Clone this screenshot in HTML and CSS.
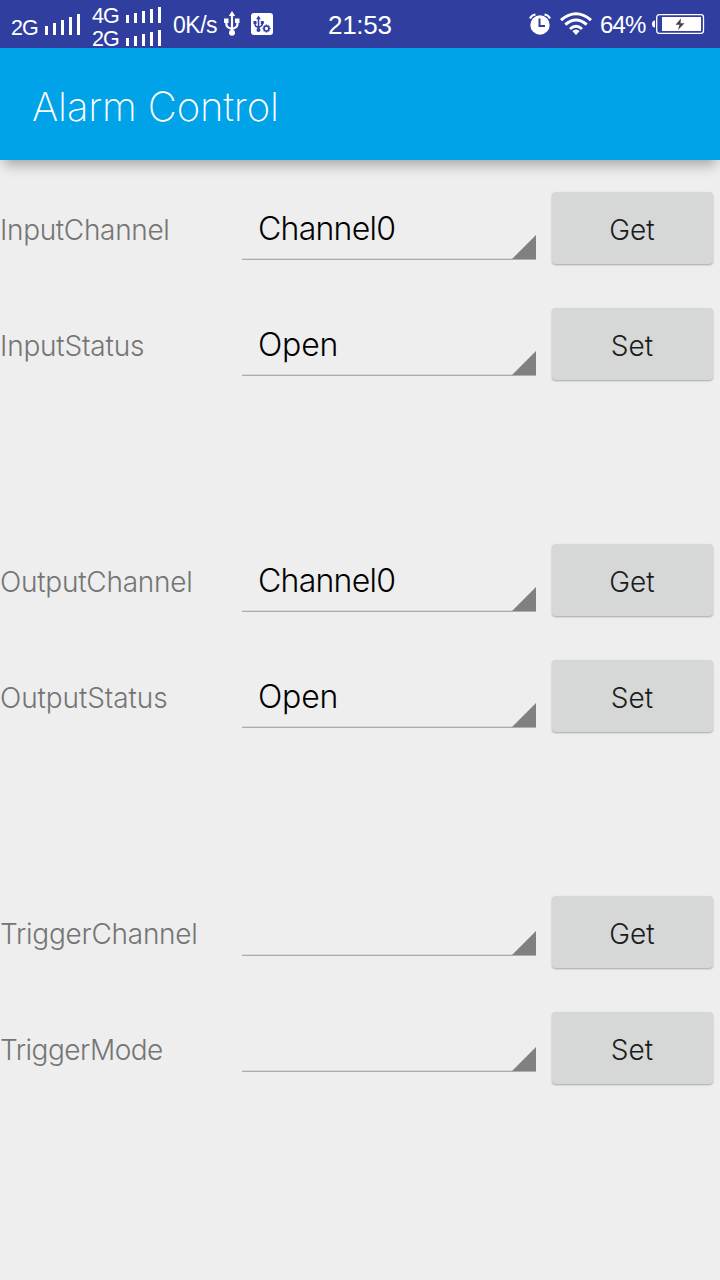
FILE: index.html
```
<!DOCTYPE html>
<html lang="en">
<head>
<meta charset="utf-8">
<title>Alarm Control</title>
<link rel="stylesheet" href="styles.css">
</head>
<body>
<header class="status">
  <div class="sim sim-main">
    <span class="net">2G</span>
    <svg class="bars-lg" width="35" height="21" viewBox="0 0 35 21"><path d="M0 12h3v9H0zM8 9h3v12H8zM16 6h3v15h-3zM24 3h3v18h-3zM32 0h3v21h-3z"/></svg>
  </div>
  <div class="sim-stack">
    <div class="sim"><span class="net">4G</span><svg width="35" height="16" viewBox="0 0 35 16"><path d="M0 8h3v8H0zM8 6h3v10H8zM16 4h3v12h-3zM24 2h3v14h-3zM32 0h3v16h-3z"/></svg></div>
    <div class="sim"><span class="net">2G</span><svg width="35" height="16" viewBox="0 0 35 16"><path d="M0 8h3v8H0zM8 6h3v10H8zM16 4h3v12h-3zM24 2h3v14h-3zM32 0h3v16h-3z"/></svg></div>
  </div>
  <span class="speed">0K/s</span>
  <svg class="usb" width="16" height="26" viewBox="0 0 16 26"><path d="M8 0l3.200 5H4.800zM0 7.500h4.500v4.500H0zM11 7.500h4.500v4.500H11z"/><circle cx="8" cy="21.700" r="3"/><path class="line" d="M8 4v18M2.400 11v2.500q0 3 5.600 4.500M13.400 11v2.500q0 3-5.400 4.500"/></svg>
  <svg class="debug" width="22" height="22" viewBox="0 0 22 22"><rect width="22" height="22" rx="3"/><g class="ink"><path d="M7.500 2.500l2.300 3.700H5.200zM2.500 8h3v3h-3zM9.800 8h3v3h-3z"/><circle cx="7.500" cy="17" r="2"/><path class="thin" d="M7.500 5v12M4 10v1.500q0 2 3.500 3M11.300 10v1q0 2-3.800 3.500"/><path class="thin" d="M15.500 11.500v8M11.500 15.500h8M12.700 12.700l5.600 5.600M18.300 12.700l-5.600 5.600"/></g><circle class="hub" cx="15.500" cy="15.500" r="2.400"/></svg>
  <span class="clock">21:53</span>
  <svg class="alarm" width="22" height="22" viewBox="0 0 22 22"><circle cx="11" cy="12" r="9.700"/><path class="line tips" d="M1 5.500Q2.500 2 6.500 1.500M21 5.500Q19.500 2 15.500 1.500"/><path class="hands" d="M10.500 5.500v7.500H16"/></svg>
  <svg class="wifi" width="32" height="24" viewBox="0 0 32 24"><path class="line arc" d="M1 8.200Q16-4.600 31 8.200M5.300 12.700Q16 3.400 26.700 12.700M10 17Q16 11.500 22 17"/><path d="M12.300 19q3.700-3 7.400 0L16 23z"/></svg>
  <span class="percent">64%</span>
  <svg class="battery" width="53" height="20" viewBox="0 0 53 20"><path d="M3 6.500v7Q0 13.500 0 10t3-3.500z"/><rect class="shell" x="4.700" y=".7" width="46.800" height="18.600" rx="2.500"/><rect x="10" y="3" width="39" height="14"/><path class="bolt" d="M29 4.500l-5.500 6.200h4L26 16l6.500-6.700h-4z"/></svg>
</header>
<div class="appbar"><h1 class="title">Alarm Control</h1></div>
<main class="content">
  <section class="group">
    <div class="row"><span class="label input-channel">InputChannel</span><div class="spinner"><span class="value v-channel">Channel0</span></div><button class="btn">Get</button></div>
    <div class="row"><span class="label input-status">InputStatus</span><div class="spinner"><span class="value v-open">Open</span></div><button class="btn">Set</button></div>
  </section>
  <section class="group">
    <div class="row"><span class="label output-channel">OutputChannel</span><div class="spinner"><span class="value v-channel">Channel0</span></div><button class="btn">Get</button></div>
    <div class="row"><span class="label output-status">OutputStatus</span><div class="spinner"><span class="value v-open">Open</span></div><button class="btn">Set</button></div>
  </section>
  <section class="group">
    <div class="row"><span class="label trigger-channel">TriggerChannel</span><div class="spinner empty"></div><button class="btn">Get</button></div>
    <div class="row"><span class="label trigger-mode">TriggerMode</span><div class="spinner empty"></div><button class="btn">Set</button></div>
  </section>
</main>
</body>
</html>
```
FILE: styles.css
```
* { box-sizing: border-box; }
body {
  margin: 0;
  width: 720px;
  height: 1280px;
  overflow: hidden;
  background: #eeeeee;
  font-family: Inter, "Liberation Sans", sans-serif;
  font-weight: 300;
}
.status {
  display: flex;
  align-items: flex-start;
  height: 48px;
  background: #303f9f;
  color: #fff;
  font-family: "Liberation Sans", sans-serif;
  font-weight: 400;
  white-space: nowrap;
}
.status svg { display: block; flex: none; fill: #fff; }
.status span { flex: none; }
.sim { display: flex; align-items: flex-end; }
.sim-main { margin: 14px 0 0 11px; width: 81px; }
.net { width: 34px; height: 16px; font-size: 21.5px; line-height: 18px; letter-spacing: -1px; }
.sim-stack { display: flex; flex-direction: column; gap: 7px; margin-top: 7px; width: 81px; }
.status .line { fill: none; stroke: #fff; stroke-width: 2.2; }
.speed { width: 51px; margin-top: 12px; font-size: 23px; line-height: 26px; letter-spacing: -0.5px; }
.usb { margin-top: 11px; }
.debug { margin: 13px 0 0 11px; }
.ink { fill: #303f9f; }
.thin { fill: none; stroke: #303f9f; stroke-width: 1.5; }
.hub { fill: #fff; stroke: #303f9f; stroke-width: 1.5; }
.clock { width: 201px; margin: 10px 0 0 55px; font-size: 26px; line-height: 30px; letter-spacing: -0.3px; }
.alarm { margin-top: 13px; }
.status .tips { stroke-width: 2; }
.hands { fill: none; stroke: #303f9f; stroke-width: 2; }
.wifi { margin: 12px 0 0 9px; }
.status .arc { stroke-width: 3; }
.percent { width: 52px; margin: 11px 0 0 8px; font-size: 24px; line-height: 27px; letter-spacing: -0.9px; }
.battery { margin-top: 14px; }
.status .shell { fill: none; stroke: #fff; stroke-width: 1.3; }
.status .bolt { fill: #444; }
.appbar {
  display: flex;
  align-items: center;
  height: 112px;
  padding: 5px 32px 0;
  background: #00a2e8;
  box-shadow: 0 9px 12px -4px rgba(0, 0, 0, 0.3);
}
.title { margin: 0; color: #fff; font-size: 40px; font-weight: 250; line-height: 49px; letter-spacing: -0.15px; }
.content { padding-top: 10px; }
.group { height: 352px; }
.row {
  display: grid;
  grid-template-columns: 242px 294px 161px;
  height: 116px;
  align-items: start;
}
.label { margin-top: 43px; font-size: 28px; line-height: 34px; color: #757575; white-space: nowrap; }
.input-channel { letter-spacing: -0.33px; }
.input-status { letter-spacing: -0.2px; }
.output-channel { letter-spacing: -0.25px; }
.output-status { letter-spacing: -0.1px; }
.trigger-channel { letter-spacing: -0.25px; }
.trigger-mode { letter-spacing: -0.5px; }
.spinner {
  height: 90px;
  padding: 38px 16px 0;
  background:
    linear-gradient(135deg, transparent 49.5%, #808080 50.5%) right bottom 1px / 24px 24px no-repeat,
    linear-gradient(#d8d8d8 50%, #adadad 50%) left bottom / 100% 2px no-repeat;
}
.empty { height: 82px; }
.value { display: block; font-size: 32px; line-height: 41px; color: #000; }
.v-channel { letter-spacing: -0.75px; }
.v-open { letter-spacing: -0.2px; }
.btn {
  width: 161px;
  height: 72px;
  margin: 22px 0 0 16px;
  padding: 3px 1px 0 0;
  border: 0;
  border-radius: 4px;
  background: #d6d8d7;
  box-shadow: 0 1px 2px rgba(0, 0, 0, 0.3);
  color: #1b1d1c;
  font: 300 28px/34px Inter, "Liberation Sans", sans-serif;
}
```
